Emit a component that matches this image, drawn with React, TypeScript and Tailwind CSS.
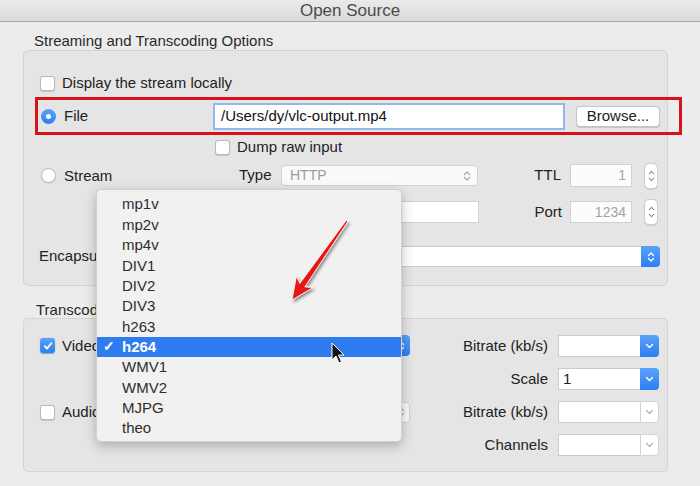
import React from "react";

const font = "font-['Liberation_Sans',Arial,sans-serif]";

function Checkbox({ checked = false }: { checked?: boolean }) {
  if (checked) {
    return (
      <div className="w-[15px] h-[15px] shrink-0 rounded-[3px] bg-gradient-to-b from-[#5aa2f8] to-[#2b7ff2] flex items-center justify-center shadow-[0_0.5px_1px_rgba(0,0,0,0.3)]">
        <svg width="10" height="10" viewBox="0 0 10 10">
          <path d="M1.8 5.2 L4 7.6 L8.3 2.2" fill="none" stroke="white" strokeWidth="1.8" strokeLinecap="round" strokeLinejoin="round" />
        </svg>
      </div>
    );
  }
  return (
    <div className="w-[15px] h-[15px] shrink-0 rounded-[3px] bg-white border border-[#b9b9b9] shadow-[0_0.5px_1px_rgba(0,0,0,0.15)]" />
  );
}

function Radio({ checked = false }: { checked?: boolean }) {
  if (checked) {
    return (
      <div className="w-[15px] h-[15px] shrink-0 rounded-full bg-gradient-to-b from-[#5aa2f8] to-[#2b7ff2] flex items-center justify-center">
        <div className="w-[5px] h-[5px] rounded-full bg-white" />
      </div>
    );
  }
  return <div className="w-[15px] h-[15px] shrink-0 rounded-full bg-white border border-[#b9b9b9] shadow-[0_0.5px_1px_rgba(0,0,0,0.15)]" />;
}

function UpDown({ color = "#8a8a8a" }: { color?: string }) {
  return (
    <svg width="8" height="12" viewBox="0 0 8 12">
      <path d="M1.5 4.5 L4 2 L6.5 4.5 M1.5 7.5 L4 10 L6.5 7.5" fill="none" stroke={color} strokeWidth="1.3" strokeLinecap="round" strokeLinejoin="round" />
    </svg>
  );
}

function Down({ color = "white" }: { color?: string }) {
  return (
    <svg width="9" height="6" viewBox="0 0 9 6">
      <path d="M1.5 1.5 L4.5 4.5 L7.5 1.5" fill="none" stroke={color} strokeWidth="1.4" strokeLinecap="round" strokeLinejoin="round" />
    </svg>
  );
}

function Stepper() {
  return (
    <div className="w-[14px] h-[26px] rounded-[5px] bg-white border border-[#cdcdcd] flex flex-col items-center justify-center gap-[2px] shadow-[0_0.5px_1px_rgba(0,0,0,0.1)]">
      <svg width="7" height="5" viewBox="0 0 7 5"><path d="M1 4 L3.5 1.3 L6 4" fill="none" stroke="#8a8a8a" strokeWidth="1.1" /></svg>
      <svg width="7" height="5" viewBox="0 0 7 5"><path d="M1 1 L3.5 3.7 L6 1" fill="none" stroke="#8a8a8a" strokeWidth="1.1" /></svg>
    </div>
  );
}

function Combo({ value = "", enabled = true }: { value?: string; enabled?: boolean }) {
  return (
    <div className="w-[101px] h-[22px] flex">
      <div className="w-[82px] h-full bg-white border border-[#cbcbcb] border-r-0 flex items-center pl-[4px] text-[15px] text-[#222]">
        {value}
      </div>
      {enabled ? (
        <div className="w-[19px] h-full rounded-r-[4px] bg-gradient-to-b from-[#5aa2f8] to-[#2b7ff2] flex items-center justify-center">
          <Down />
        </div>
      ) : (
        <div className="w-[19px] h-full rounded-r-[4px] bg-white border border-[#d3d3d3] flex items-center justify-center">
          <Down color="#b5b5b5" />
        </div>
      )}
    </div>
  );
}

const items = ["mp1v", "mp2v", "mp4v", "DIV1", "DIV2", "DIV3", "h263", "h264", "WMV1", "WMV2", "MJPG", "theo"];

export default function App() {
  return (
    <div className={`relative w-[700px] h-[486px] overflow-hidden bg-[#ececec] text-[#222] ${font}`}>
      {/* title bar */}
      <div className="h-[22px] bg-gradient-to-b from-[#ebebeb] to-[#d9d9d9] border-b border-[#a9a9a9] flex items-center justify-center">
        <span className="text-[17px] text-[#4b4b4b] leading-none">Open Source</span>
      </div>

      <div className="pl-[23px]">
        <div className="h-[28px] pt-[10px] pl-[11px] text-[15px] leading-[17px] text-[#2a2a2a] whitespace-nowrap">Streaming and Transcoding Options</div>

        {/* group 1 */}
        <div className="w-[645px] h-[236px] rounded-[5px] border border-[#d4d4d4] bg-[#e5e5e5] flex flex-col">
          <div className="mt-[25px] h-[14px] flex items-center pl-[16px] gap-[7px] text-[15px]">
            <Checkbox />
            <span className="pt-[1px]">Display the stream locally</span>
          </div>

          <div className="mt-[7px] ml-[11px] w-[647px] h-[38px] border-[3px] border-[#d8121a] flex items-center shrink-0">
            <div className="w-[175px] flex items-center pl-[3px] gap-[8px] text-[15px]">
              <Radio checked />
              <span className="pt-[1px]">File</span>
            </div>
            <div className="w-[352px] h-[27px] bg-white border-[2px] border-[#8fb8ee] flex items-center pl-[6px] text-[15px] text-[#111]">
              /Users/dy/vlc-output.mp4
            </div>
            <div className="ml-[11px] w-[84px] h-[21px] rounded-[4px] bg-white border border-[#c6c6c6] shadow-[0_0.5px_1px_rgba(0,0,0,0.15)] flex items-center justify-center text-[15px]">
              Browse...
            </div>
          </div>

          <div className="mt-[5px] h-[14px] flex items-center pl-[191px] gap-[7px] text-[15px]">
            <Checkbox />
            <span className="pt-[1px]">Dump raw input</span>
          </div>

          <div className="mt-[8px] h-[27px] flex items-center text-[15px]">
            <div className="w-[215px] pl-[17px] flex items-center gap-[8px]">
              <Radio />
              <span className="pt-[2px]">Stream</span>
            </div>
            <div className="w-[42px]">Type</div>
            <div className="w-[197px] h-[21px] rounded-[4px] bg-[#fafafa] border border-[#d2d2d2] flex items-center justify-between pl-[8px] pr-[6px] text-[14px] text-[#9c9c9c]">
              <span>HTTP</span>
              <UpDown color="#a8a8a8" />
            </div>
            <div className="w-[92px] text-right pr-[9px]">TTL</div>
            <div className="w-[62px] h-[23px] bg-[#fcfcfc] border border-[#d2d2d2] flex items-center justify-end pr-[5px] text-[14px] text-[#a4a4a4]">1</div>
            <div className="ml-[12px]"><Stepper /></div>
          </div>

          <div className="mt-[10px] h-[26px] flex items-center text-[15px]">
            <div className="ml-[257px] w-[198px] h-[22px] bg-white border border-[#d2d2d2]" />
            <div className="w-[91px] text-right pr-[8px]">Port</div>
            <div className="w-[62px] h-[22px] bg-[#fcfcfc] border border-[#d2d2d2] flex items-center justify-end pr-[5px] text-[14px] text-[#a4a4a4]">1234</div>
            <div className="ml-[12px]"><Stepper /></div>
          </div>

          <div className="mt-[20px] h-[23px] flex items-center text-[15px]">
            <div className="w-[126px] pl-[15px]">
              <div className="w-[57px] overflow-hidden whitespace-nowrap">Encapsulation</div>
            </div>
            <div className="w-[510px] h-[21px] flex">
              <div className="flex-1 bg-white border border-[#cbcbcb] border-r-0 rounded-l-[4px]" />
              <div className="w-[19px] rounded-r-[4px] bg-gradient-to-b from-[#5aa2f8] to-[#2b7ff2] flex items-center justify-center">
                <UpDown color="white" />
              </div>
            </div>
          </div>
        </div>

        <div className="h-[32px] pt-[15px] pl-[13px] text-[15px] leading-[17px] text-[#2a2a2a]">
          <div className="w-[60px] overflow-hidden whitespace-nowrap">Transcoding options</div>
        </div>

        {/* group 2 */}
        <div className="w-[645px] h-[154px] rounded-[5px] border border-[#d4d4d4] bg-[#e5e5e5] flex flex-col text-[15px]">
          <div className="mt-[15px] h-[23px] flex items-center">
            <div className="w-[386px] flex items-center pl-[16px]">
              <Checkbox checked />
              <span className="ml-[7px] w-[106px] pt-[1px]">
                <span className="block w-[34px] overflow-hidden whitespace-nowrap">Video</span>
              </span>
              <div className="w-[257px] h-[21px] flex">
                <div className="flex-1 bg-white border border-[#cbcbcb] border-r-0 rounded-l-[4px]" />
                <div className="w-[18px] rounded-r-[4px] bg-gradient-to-b from-[#5aa2f8] to-[#2b7ff2] flex items-center justify-center">
                  <UpDown color="white" />
                </div>
              </div>
            </div>
            <div className="w-[148px] text-right pr-[10px] pt-[1px]">Bitrate (kb/s)</div>
            <Combo />
          </div>

          <div className="mt-[11px] h-[22px] flex items-center">
            <div className="w-[534px] text-right pr-[10px] pt-[1px]">Scale</div>
            <Combo value="1" />
          </div>

          <div className="mt-[11px] h-[22px] flex items-center">
            <div className="w-[386px] flex items-center pl-[16px]">
              <Checkbox />
              <span className="ml-[7px] w-[106px] pt-[1px]">
                <span className="block w-[34px] overflow-hidden whitespace-nowrap">Audio</span>
              </span>
              <div className="w-[257px] h-[21px] rounded-[4px] bg-[#fafafa] border border-[#d2d2d2] flex items-center justify-end pr-[4px]">
                <UpDown color="#b0b0b0" />
              </div>
            </div>
            <div className="w-[148px] text-right pr-[10px] pt-[1px]">Bitrate (kb/s)</div>
            <Combo enabled={false} />
          </div>

          <div className="mt-[11px] h-[22px] flex items-center">
            <div className="w-[534px] text-right pr-[10px] pt-[1px]">Channels</div>
            <Combo enabled={false} />
          </div>
        </div>
      </div>

      {/* open popup menu */}
      <div className="absolute left-[96px] top-[189px] w-[306px] h-[253px] rounded-[5px] bg-[#f1f1f1] border border-[#d0d0d0] shadow-[0_4px_12px_rgba(0,0,0,0.25)] pt-[4px] text-[15px] text-[#2e2e2e]">
        {items.map((it) => {
          const sel = it === "h264";
          return (
            <div
              key={it}
              className={`h-[20.36px] flex items-center ${sel ? "bg-[#2f7cf0] text-white font-bold" : ""}`}
            >
              <span className="w-[25px] pl-[6px] text-[14px]">{sel ? "✓" : ""}</span>
              <span className="pt-[1px]">{it}</span>
            </div>
          );
        })}
      </div>

      {/* red annotation arrow + mouse pointer */}
      <svg className="absolute left-0 top-0" width="700" height="486" viewBox="0 0 700 486">
        <defs>
          <filter id="sh" x="-50%" y="-50%" width="200%" height="200%">
            <feDropShadow dx="1.5" dy="2" stdDeviation="1.5" floodColor="#000" floodOpacity="0.45" />
          </filter>
          <linearGradient id="rg" x1="0" y1="0" x2="1" y2="1">
            <stop offset="0" stopColor="#ff2a2a" />
            <stop offset="1" stopColor="#d40000" />
          </linearGradient>
        </defs>
        <polygon
          points="292,300 313,287.5 304.8,286.9 347.8,221.6 346.2,220.4 299.8,283.5 296.5,276"
          fill="url(#rg)"
          stroke="white"
          strokeWidth="0.8"
          strokeLinejoin="round"
          filter="url(#sh)"
        />
        <path
          d="M332 343 L332 360 L336 356 L339 363 L341.5 362 L338.5 355 L344 355 Z"
          fill="#111"
          stroke="white"
          strokeWidth="1"
          strokeLinejoin="round"
        />
      </svg>
    </div>
  );
}
